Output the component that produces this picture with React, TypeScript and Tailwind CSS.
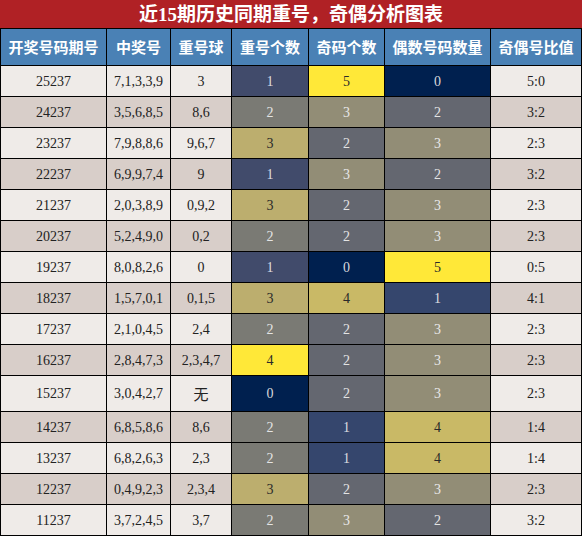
const rows: [string, string, string, number, number, number, string][] = [
  ["25237", "7,1,3,3,9", "3", 1, 5, 0, "5:0"],
  ["24237", "3,5,6,8,5", "8,6", 2, 3, 2, "3:2"],
  ["23237", "7,9,8,8,6", "9,6,7", 3, 2, 3, "2:3"],
  ["22237", "6,9,9,7,4", "9", 1, 3, 2, "3:2"],
  ["21237", "2,0,3,8,9", "0,9,2", 3, 2, 3, "2:3"],
  ["20237", "5,2,4,9,0", "0,2", 2, 2, 3, "2:3"],
  ["19237", "8,0,8,2,6", "0", 1, 0, 5, "0:5"],
  ["18237", "1,5,7,0,1", "0,1,5", 3, 4, 1, "4:1"],
  ["17237", "2,1,0,4,5", "2,4", 2, 2, 3, "2:3"],
  ["16237", "2,8,4,7,3", "2,3,4,7", 4, 2, 3, "2:3"],
  ["15237", "3,0,4,2,7", "无", 0, 2, 3, "2:3"],
  ["14237", "6,8,5,8,6", "8,6", 2, 1, 4, "1:4"],
  ["13237", "6,8,2,6,3", "2,3", 2, 1, 4, "1:4"],
  ["12237", "0,4,9,2,3", "2,3,4", 3, 2, 3, "2:3"],
  ["11237", "3,7,2,4,5", "3,7", 2, 3, 2, "3:2"],
];

const headers = ["开奖号码期号", "中奖号", "重号球", "重号个数", "奇码个数", "偶数号码数量", "奇偶号比值"];

// 重号个数: scale 0-4
const repeatColor = [
  "bg-[#00204f] text-[#d8d8dc]",
  "bg-[#414b6b] text-[#dcdce0]",
  "bg-[#7a7a74] text-[#e4e4e4]",
  "bg-[#bcae6e] text-[#2a2a2a]",
  "bg-[#ffe838] text-[#2a2a2a]",
];

// 奇偶个数: scale 0-5
const countColor = [
  "bg-[#00204f] text-[#d8d8dc]",
  "bg-[#35466d] text-[#dcdce0]",
  "bg-[#646770] text-[#e4e4e4]",
  "bg-[#928d76] text-[#e8e8e8]",
  "bg-[#c9b966] text-[#2a2a2a]",
  "bg-[#ffe838] text-[#2a2a2a]",
];

const serif = "font-['Liberation_Serif','Noto_Sans_CJK_SC',serif]";

export default function App() {
  return (
    <div className="w-[582px] h-[536px] bg-white">
      <div className={`h-[28px] bg-[#b02125] text-white text-[19px] font-bold leading-[29px] text-center ${serif}`}>
        近15期历史同期重号，奇偶分析图表
      </div>
      <div className="grid grid-cols-[105px_63px_60px_76px_75px_105px_90px] gap-px bg-black p-px">
        {headers.map((h) => (
          <div
            key={h}
            className="h-[36px] flex items-center justify-center bg-[#4a81b5] text-white text-[15px] font-bold font-['Noto_Sans_CJK_SC',sans-serif]"
          >
            {h}
          </div>
        ))}
        {rows.map((r, i) => {
          const rowBg = i % 2 === 0 ? "bg-[#efebe8]" : "bg-[#d8cec9]";
          const h = r[2] === "无" ? "h-[35px]" : "h-[30px]";
          const cell = `${h} flex items-center justify-center text-[14px] ${serif}`;
          return [
            <div key={`${i}a`} className={`${cell} ${rowBg} text-[#222]`}>{r[0]}</div>,
            <div key={`${i}b`} className={`${cell} ${rowBg} text-[#222]`}>{r[1]}</div>,
            <div key={`${i}c`} className={`${cell} ${rowBg} text-[#222] ${r[2] === "无" ? "text-[15px] pt-[3px]" : ""}`}>{r[2]}</div>,
            <div key={`${i}d`} className={`${cell} ${repeatColor[r[3]]}`}>{r[3]}</div>,
            <div key={`${i}e`} className={`${cell} ${countColor[r[4]]}`}>{r[4]}</div>,
            <div key={`${i}f`} className={`${cell} ${countColor[r[5]]}`}>{r[5]}</div>,
            <div key={`${i}g`} className={`${cell} ${rowBg} text-[#222]`}>{r[6]}</div>,
          ];
        })}
      </div>
    </div>
  );
}
